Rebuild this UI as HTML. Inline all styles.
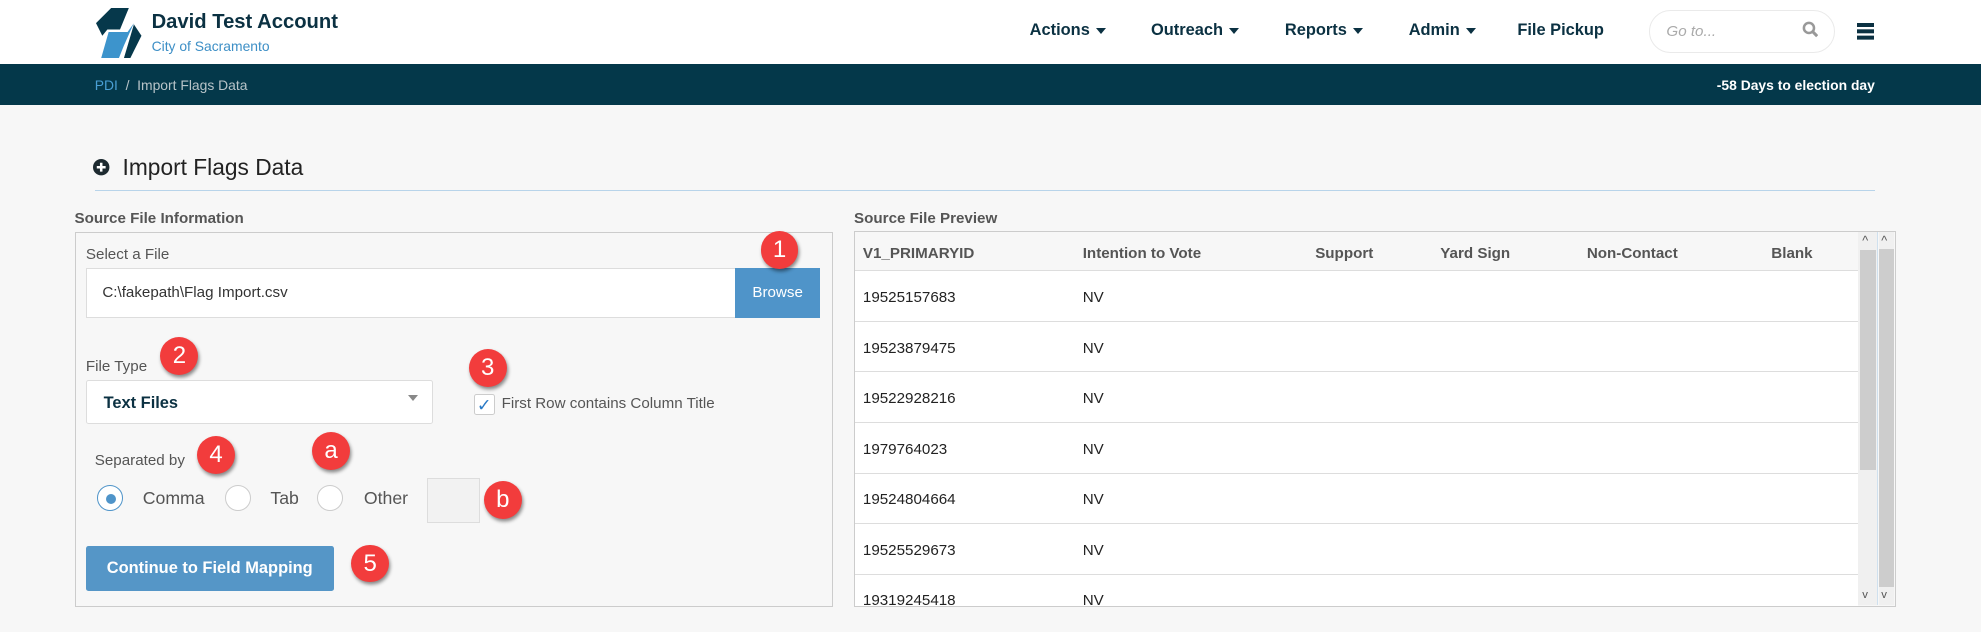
<!DOCTYPE html>
<html><head><meta charset="utf-8"><style>
html,body{margin:0;padding:0;}
body{width:1981px;height:631px;overflow:hidden;background:#f7f7f7;font-family:"Liberation Sans",Arial,sans-serif;}
#w{zoom:1.2634;width:1568px;height:500px;position:relative;}
.a{position:absolute;white-space:nowrap;}
.nav{font-size:13px;font-weight:bold;color:#0b3142;top:17px;}
.tri{display:inline-block;border-left:4px solid transparent;border-right:4px solid transparent;border-top:5px solid #0b3142;margin-left:5px;vertical-align:middle;}
.b{position:absolute;width:30px;height:30px;border-radius:50%;background:#f23c3c;color:#fff;font-size:19px;text-align:center;line-height:30px;box-shadow:1px 2px 3px rgba(0,0,0,.45);}
.lbl{font-size:12px;color:#555;}
.rad{position:absolute;width:19px;height:19px;border-radius:50%;border:1px solid #ccc;background:#fff;}
.th{font-size:12px;font-weight:bold;color:#555;top:194px;}
.row{position:absolute;left:677px;width:794px;height:40px;border-top:1px solid #ddd;background:#fff;font-size:12px;color:#222;}
.row span{position:absolute;top:14px;}
</style></head><body><div id="w">
<div class="a" style="left:0;top:0;width:1568px;height:51px;background:#fff;"></div>
<svg class="a" style="left:76px;top:6px" width="38" height="40" viewBox="0 0 38 40">
<polygon points="12,0 26,0 19,17 9,17 5,22 0,12" fill="#06384b"/>
<polygon points="10,19 25,19 30,12 22,30 18,40 4,40" fill="#3d94cc"/>
<polygon points="30,13 36,22 27,40 22,40" fill="#06384b"/>
</svg>
<div class="a" style="left:120px;top:9px;font-size:16px;font-weight:bold;color:#0b3142;">David Test Account</div>
<div class="a" style="left:120px;top:30px;font-size:11px;color:#3d8fc6;">City of Sacramento</div>
<div class="a nav" style="left:815px">Actions<span class="tri"></span></div>
<div class="a nav" style="left:911px">Outreach<span class="tri"></span></div>
<div class="a nav" style="left:1017px">Reports<span class="tri"></span></div>
<div class="a nav" style="left:1115px">Admin<span class="tri"></span></div>
<div class="a nav" style="left:1201px">File Pickup</div>
<div class="a" style="left:1305px;top:8px;width:146px;height:32px;border:1px solid #eaeaea;border-radius:17px;background:#fff;"></div>
<div class="a" style="left:1319px;top:18px;font-size:12px;font-style:italic;color:#aaa;">Go to...</div>
<svg class="a" style="left:1426px;top:17px" width="13" height="13" viewBox="0 0 13 13"><circle cx="5.5" cy="5.5" r="4" fill="none" stroke="#999" stroke-width="2"/><line x1="8.5" y1="8.5" x2="12" y2="12" stroke="#999" stroke-width="2.4"/></svg>
<div class="a" style="left:1470px;top:18px;width:13px;height:3px;background:#0b3142;box-shadow:0 5px 0 #0b3142,0 10px 0 #0b3142;"></div>
<div class="a" style="left:0;top:51px;width:1568px;height:32px;background:#04384a;"></div>
<div class="a" style="left:75px;top:61px;font-size:11px;color:#4a9fd5;">PDI <span style="color:#b8c4c9">&nbsp;/&nbsp; Import Flags Data</span></div>
<div class="a" style="right:84px;top:61px;font-size:11px;font-weight:bold;color:#fff;">-58 Days to election day</div>
<svg class="a" style="left:74px;top:126px" width="13" height="13" viewBox="0 0 13 13"><circle cx="6.5" cy="6.5" r="6.5" fill="#1d2a30"/><path d="M6.5 3v7M3 6.5h7" stroke="#fff" stroke-width="2"/></svg>
<div class="a" style="left:97px;top:122px;font-size:18px;color:#222;">Import Flags Data</div>
<div class="a" style="left:75px;top:150px;width:1409px;height:1px;background:#b8d4ea;"></div>
<div class="a" style="left:59px;top:166px;font-size:12px;font-weight:bold;color:#555;">Source File Information</div>
<div class="a" style="left:59px;top:184px;width:599px;height:295px;border:1px solid #ccc;"></div>
<div class="a lbl" style="left:68px;top:195px;">Select a File</div>
<div class="a" style="left:68px;top:212px;width:513px;height:38px;border:1px solid #ddd;background:#fff;"></div>
<div class="a" style="left:81px;top:225px;font-size:12px;color:#333;">C:\fakepath\Flag Import.csv</div>
<div class="a" style="left:582px;top:212px;width:67px;height:40px;background:#4f94c9;color:#fff;font-size:12px;text-align:center;line-height:40px;">Browse</div>
<div class="b" style="left:602px;top:183px">1</div>
<div class="a lbl" style="left:68px;top:283px;">File Type</div>
<div class="b" style="left:127px;top:267px">2</div>
<div class="a" style="left:68px;top:301px;width:273px;height:33px;border:1px solid #ddd;background:#fff;border-radius:2px;"></div>
<div class="a" style="left:82px;top:312px;font-size:13px;font-weight:bold;color:#0b3142;">Text Files</div>
<div class="a" style="left:323px;top:313px;border-left:4px solid transparent;border-right:4px solid transparent;border-top:5px solid #888;"></div>
<div class="b" style="left:371px;top:276px">3</div>
<div class="a" style="left:375px;top:312px;width:15px;height:15px;border:1px solid #ccc;background:#fff;border-radius:2px;color:#2a7ac6;font-size:14px;line-height:16px;text-align:center;">✓</div>
<div class="a lbl" style="left:397px;top:313px;">First Row contains Column Title</div>
<div class="a lbl" style="left:75px;top:358px;">Separated by</div>
<div class="b" style="left:156px;top:345px">4</div>
<div class="b" style="left:247px;top:342px">a</div>
<div class="rad" style="left:77px;top:384px;border-color:#4f94c9;"><div style="position:absolute;left:6px;top:6px;width:8px;height:8px;border-radius:50%;background:#4f94c9"></div></div>
<div class="a" style="left:113px;top:386px;font-size:14px;color:#555;">Comma</div>
<div class="rad" style="left:178px;top:384px;"></div>
<div class="a" style="left:214px;top:386px;font-size:14px;color:#555;">Tab</div>
<div class="rad" style="left:251px;top:384px;"></div>
<div class="a" style="left:288px;top:386px;font-size:14px;color:#555;">Other</div>
<div class="a" style="left:338px;top:378px;width:40px;height:34px;border:1px solid #ddd;background:#f2f2f2;"></div>
<div class="b" style="left:383px;top:381px">b</div>
<div class="a" style="left:68px;top:432px;width:196px;height:36px;background:#5596c7;border-radius:2px;color:#fff;font-size:13px;font-weight:bold;text-align:center;line-height:36px;">Continue to Field Mapping</div>
<div class="b" style="left:278px;top:431px">5</div>
<div class="a" style="left:676px;top:166px;font-size:12px;font-weight:bold;color:#555;">Source File Preview</div>
<div class="a" style="left:676px;top:183px;width:823px;height:296px;border:1px solid #ccc;background:#f7f7f7;overflow:hidden;"></div>
<div class="a th" style="left:683px">V1_PRIMARYID</div>
<div class="a th" style="left:857px">Intention to Vote</div>
<div class="a th" style="left:1041px">Support</div>
<div class="a th" style="left:1140px">Yard Sign</div>
<div class="a th" style="left:1256px">Non-Contact</div>
<div class="a th" style="left:1402px">Blank</div>
<div class="row" style="top:214px"><span style="left:6px">19525157683</span><span style="left:180px">NV</span></div>
<div class="row" style="top:254px"><span style="left:6px">19523879475</span><span style="left:180px">NV</span></div>
<div class="row" style="top:294px"><span style="left:6px">19522928216</span><span style="left:180px">NV</span></div>
<div class="row" style="top:334px"><span style="left:6px">1979764023</span><span style="left:180px">NV</span></div>
<div class="row" style="top:374px"><span style="left:6px">19524804664</span><span style="left:180px">NV</span></div>
<div class="row" style="top:414px"><span style="left:6px">19525529673</span><span style="left:180px">NV</span></div>
<div class="row" style="top:454px;height:25px;overflow:hidden"><span style="left:6px">19319245418</span><span style="left:180px">NV</span></div>
<div class="a" style="left:1471px;top:184px;width:15px;height:295px;background:#f0f0f0;border-right:1px solid #cfe0ee;"></div>
<div class="a" style="left:1472px;top:198px;width:13px;height:174px;background:#cdcdcd;"></div>
<div class="a" style="left:1487px;top:184px;width:12px;height:295px;background:#f0f0f0;"></div>
<div class="a" style="left:1487px;top:197px;width:12px;height:268px;background:#cdcdcd;"></div>
<div class="a" style="left:1474px;top:185px;font-size:10px;color:#555;">^</div>
<div class="a" style="left:1489px;top:185px;font-size:10px;color:#555;">^</div>
<div class="a" style="left:1474px;top:466px;font-size:9px;color:#555;">v</div>
<div class="a" style="left:1489px;top:466px;font-size:9px;color:#555;">v</div>
</div></body></html>
